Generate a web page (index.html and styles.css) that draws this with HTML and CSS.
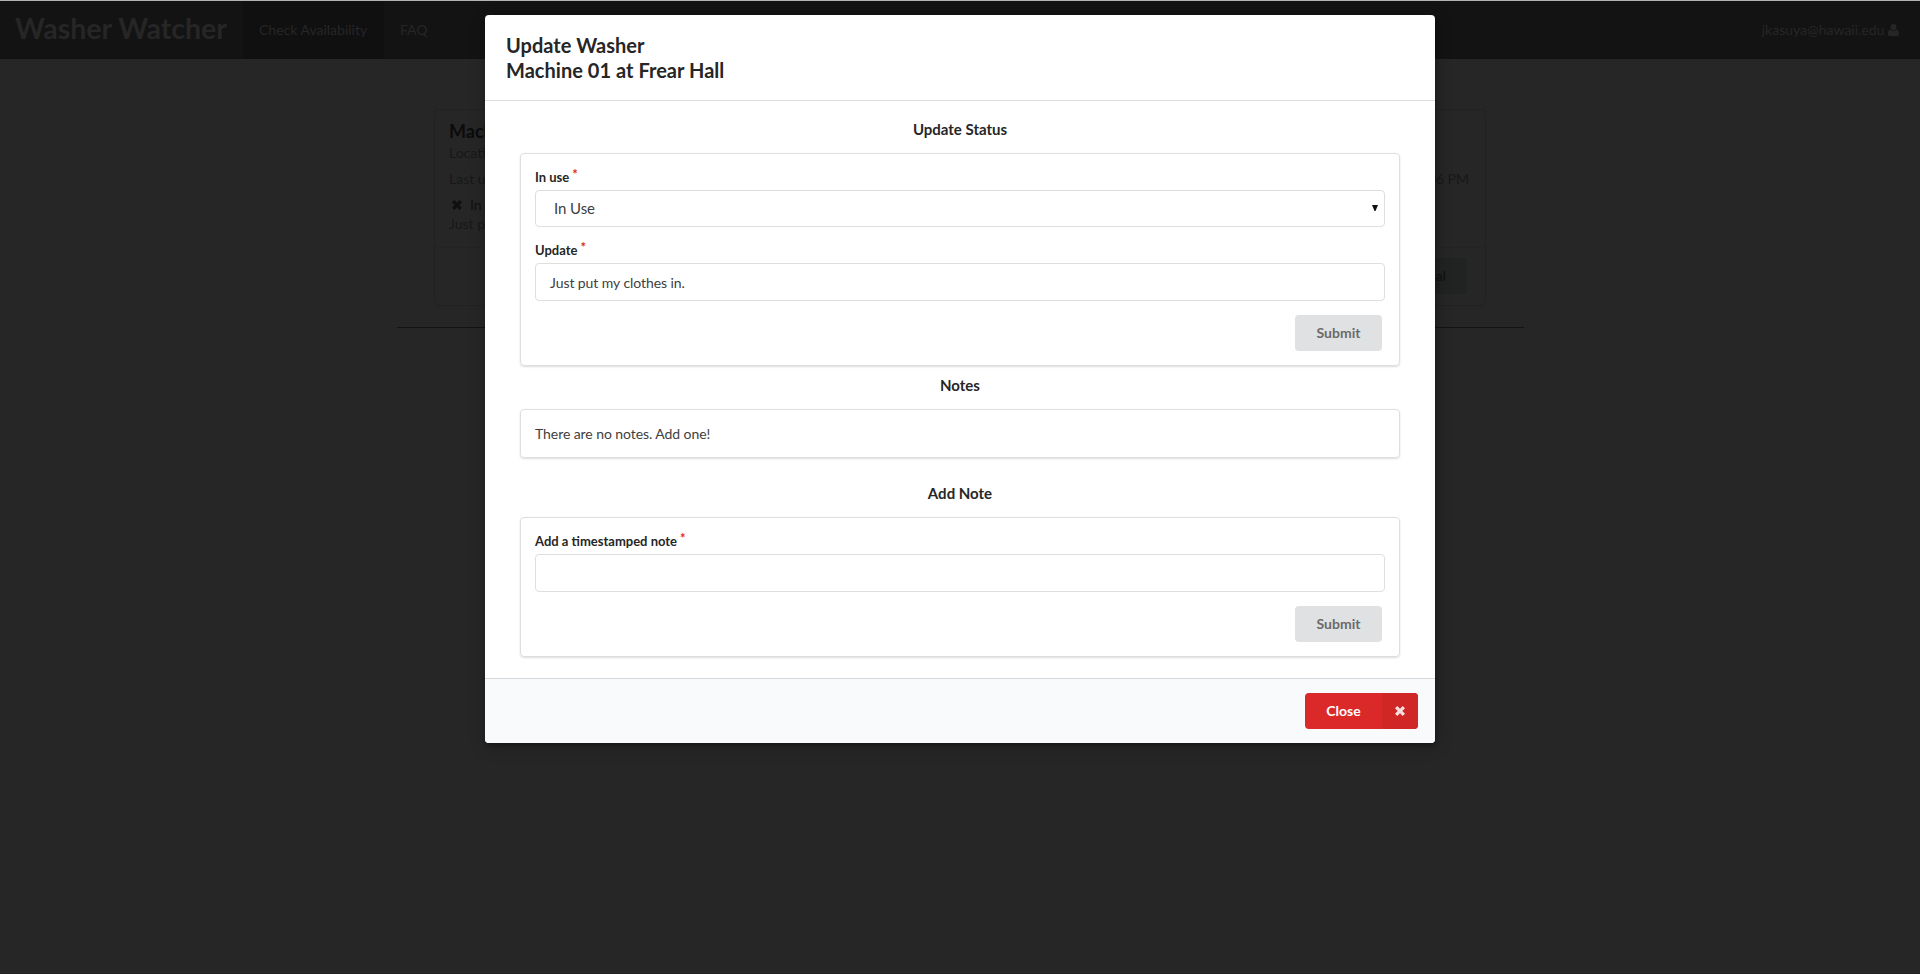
FILE: index.html
```html
<!DOCTYPE html>
<html lang="en">
<head>
<meta charset="utf-8">
<title>Washer Watcher</title>
<link rel="stylesheet" href="styles.css">
</head>
<body>
<div class="page">
  <nav class="navbar">
    <h1 class="brand">Washer Watcher</h1>
    <a class="nav-item active">Check Availability</a>
    <a class="nav-item">FAQ</a>
    <a class="nav-user">jkasuya@hawaii.edu
      <svg class="user-icon" viewBox="0 0 11 12"><path d="M5.5 0a3 3 0 0 1 3 3c0 1.7-1.3 3.2-3 3.2S2.500 4.700 2.500 3a3 3 0 0 1 3-3zM2.500 5.600c.8.8 1.800 1.300 3 1.300s2.200-.5 3-1.300C10.400 5.800 11 7.600 11 9.700 11 11.100 10.100 12 8.800 12H2.200C.9 12 0 11.100 0 9.700 0 7.600.6 5.800 2.500 5.600z"/></svg>
    </a>
  </nav>
  <main class="container">
    <section class="card">
      <div class="card-body">
        <h2 class="card-title">Machine 01</h2>
        <div class="meta">Location</div>
        <div class="meta updated"><span>Last update</span><span>06 PM</span></div>
        <div class="status"><svg class="x-icon" viewBox="0 0 10 10"><path d="M2.300 0 5 2.700 7.700 0 10 2.300 7.300 5 10 7.700 7.700 10 5 7.300 2.300 10 0 7.700 2.700 5 0 2.300z"/></svg>In Use</div>
        <div class="meta last">Just put</div>
      </div>
      <div class="card-extra"><span class="card-button">al</span></div>
    </section>
    <hr class="rule">
  </main>
</div>

<div class="modal">
  <header class="modal-header">Update Washer<br>Machine 01 at Frear Hall</header>
  <div class="content">
    <h3 class="title">Update Status</h3>
    <form class="segment">
      <label class="label">In use<span class="req">*</span></label>
      <div class="field select"><span>In Use</span><svg class="caret" viewBox="0 0 6 6"><path d="M0 0h6L3.500 6h-1z"/></svg></div>
      <label class="label second">Update<span class="req">*</span></label>
      <div class="field">Just put my clothes in.</div>
      <div class="submit-row"><button class="submit" type="button">Submit</button></div>
    </form>
    <h3 class="title notes-title">Notes</h3>
    <div class="segment notes">There are no notes. Add one!</div>
    <h3 class="title add-title">Add Note</h3>
    <form class="segment add">
      <label class="label">Add a timestamped note<span class="req">*</span></label>
      <div class="field"></div>
      <div class="submit-row"><button class="submit" type="button">Submit</button></div>
    </form>
  </div>
  <footer class="actions">
    <button class="close" type="button"><span class="close-text">Close</span><span class="close-icon"><svg class="x-icon" viewBox="0 0 10 10"><path d="M2.300 0 5 2.700 7.700 0 10 2.300 7.300 5 10 7.700 7.700 10 5 7.300 2.300 10 0 7.700 2.700 5 0 2.300z"/></svg></span></button>
  </footer>
</div>
</body>
</html>
```

FILE: styles.css
```css
* { box-sizing: border-box; }
body {
  margin: 0;
  height: 974px;
  overflow: hidden;
  background: #262626;
  font: 14px/20px Lato, "Liberation Sans", sans-serif;
  color: #262626;
}
h1, h2, h3 { margin: 0; }
.page {
  height: 974px;
  border-top: 1px solid #b0b5b3;
  border-bottom: 1px solid #261f26;
}
.navbar {
  display: flex;
  height: 58px;
  background: #131313;
}
.brand {
  width: 243px;
  padding: 9px 0 0 15px;
  font-size: 28.5px;
  line-height: 36px;
  white-space: nowrap;
}
.nav-item { padding: 19px 16px; }
.active { background: #101010; width: 141px; white-space: nowrap; }
.nav-user { margin-left: auto; padding: 19px 21px 0 0; white-space: nowrap; }
.user-icon { width: 11px; height: 12px; fill: #262626; vertical-align: -1px; }
.container { width: 1127px; margin: 50px auto 0; }
.card {
  width: 1052px;
  height: 197px;
  margin: 0 auto;
  border: 1px solid #212121;
  border-radius: 4px;
}
.card-body { height: 137px; padding: 10px 16px 0 14px; color: #161616; }
.card-title { font-size: 18px; line-height: 23px; color: #0b0b0b; }
.meta { color: #181818; }
.updated { display: flex; justify-content: space-between; margin-top: 6px; }
.last { line-height: 18px; }
.status { display: flex; align-items: center; margin-top: 6px; color: #101010; }
.status .x-icon { margin: 0 8px 0 3px; fill: #101010; }
.x-icon { width: 10px; height: 10px; }
.card-extra {
  display: flex;
  justify-content: flex-end;
  padding: 10px 18px 0 0;
  border-top: 1px solid #232323;
}
.card-button {
  width: 90px;
  height: 36px;
  padding-right: 21px;
  border-radius: 4px;
  background: #202322;
  color: #141414;
  font-weight: 700;
  line-height: 36px;
  text-align: right;
}
.rule { height: 1px; margin: 21px 0 0; border: 0; background: #131313; }

.modal {
  position: absolute;
  top: 15px;
  left: 485px;
  width: 950px;
  height: 728px;
  overflow: hidden;
  border-radius: 4px;
  background: #fff;
  color: #404040;
  box-shadow: 1px 3px 3px rgba(0,0,0,.2), 1px 3px 15px 2px rgba(0,0,0,.2);
}
.modal-header {
  height: 86px;
  padding: 18px 21px 0;
  border-bottom: 1px solid #dededf;
  color: #262626;
  font-size: 20px;
  font-weight: 700;
  line-height: 25px;
  letter-spacing: .03px;
}
.content { height: 577px; padding: 19px 35px 0; }
.title {
  height: 33px;
  color: #262626;
  font-size: 15px;
  font-weight: 700;
  line-height: 19px;
  text-align: center;
}
.segment {
  height: 213px;
  padding: 14px;
  border: 1px solid #dededf;
  border-radius: 4px;
  box-shadow: 0 1px 2px rgba(34,36,38,.15);
  letter-spacing: -.07px;
}
.label {
  display: block;
  height: 22px;
  color: #262626;
  font-size: 13px;
  font-weight: 700;
  line-height: 18px;
  letter-spacing: 0;
}
.second { margin-top: 14px; }
.req { margin-left: 3px; color: #db2828; position: relative; top: -3px; font-size: 13px; line-height: 1; }
.field {
  height: 38px;
  padding: 0 14px;
  border: 1px solid #dededf;
  border-radius: 4px;
  line-height: 38px;
}
.select {
  display: flex;
  align-items: center;
  justify-content: space-between;
  height: 37px;
  padding: 0 6px 1px 18px;
  font-size: 15px;
}
.caret { width: 6px; height: 6px; fill: #111; }
.submit-row { display: flex; justify-content: flex-end; padding: 14px 3px 0 0; }
.submit {
  width: 87px;
  height: 36px;
  padding: 0;
  border: 0;
  border-radius: 4px;
  background: #e0e1e2;
  color: #6b6b6c;
  font: 700 14px/36px Lato, sans-serif;
}
.notes-title { margin-top: 10px; }
.notes { height: 49px; }
.add-title { margin-top: 26px; }
.add { height: 140px; }
.actions {
  display: flex;
  justify-content: flex-end;
  height: 65px;
  padding: 14px 17px 0 0;
  border-top: 1px solid #d6d9dc;
  background: #f9fafb;
}
.close {
  display: flex;
  width: 113px;
  height: 36px;
  padding: 0;
  overflow: hidden;
  border: 0;
  border-radius: 4px;
  background: #db2828;
  color: #fff;
  font: 700 14px/36px Lato, sans-serif;
}
.close-text { width: 77px; text-align: center; }
.close-icon { display: flex; width: 36px; height: 36px; align-items: center; justify-content: center; background: #d02626; }
.close-icon .x-icon { fill: #f9dede; }
```
